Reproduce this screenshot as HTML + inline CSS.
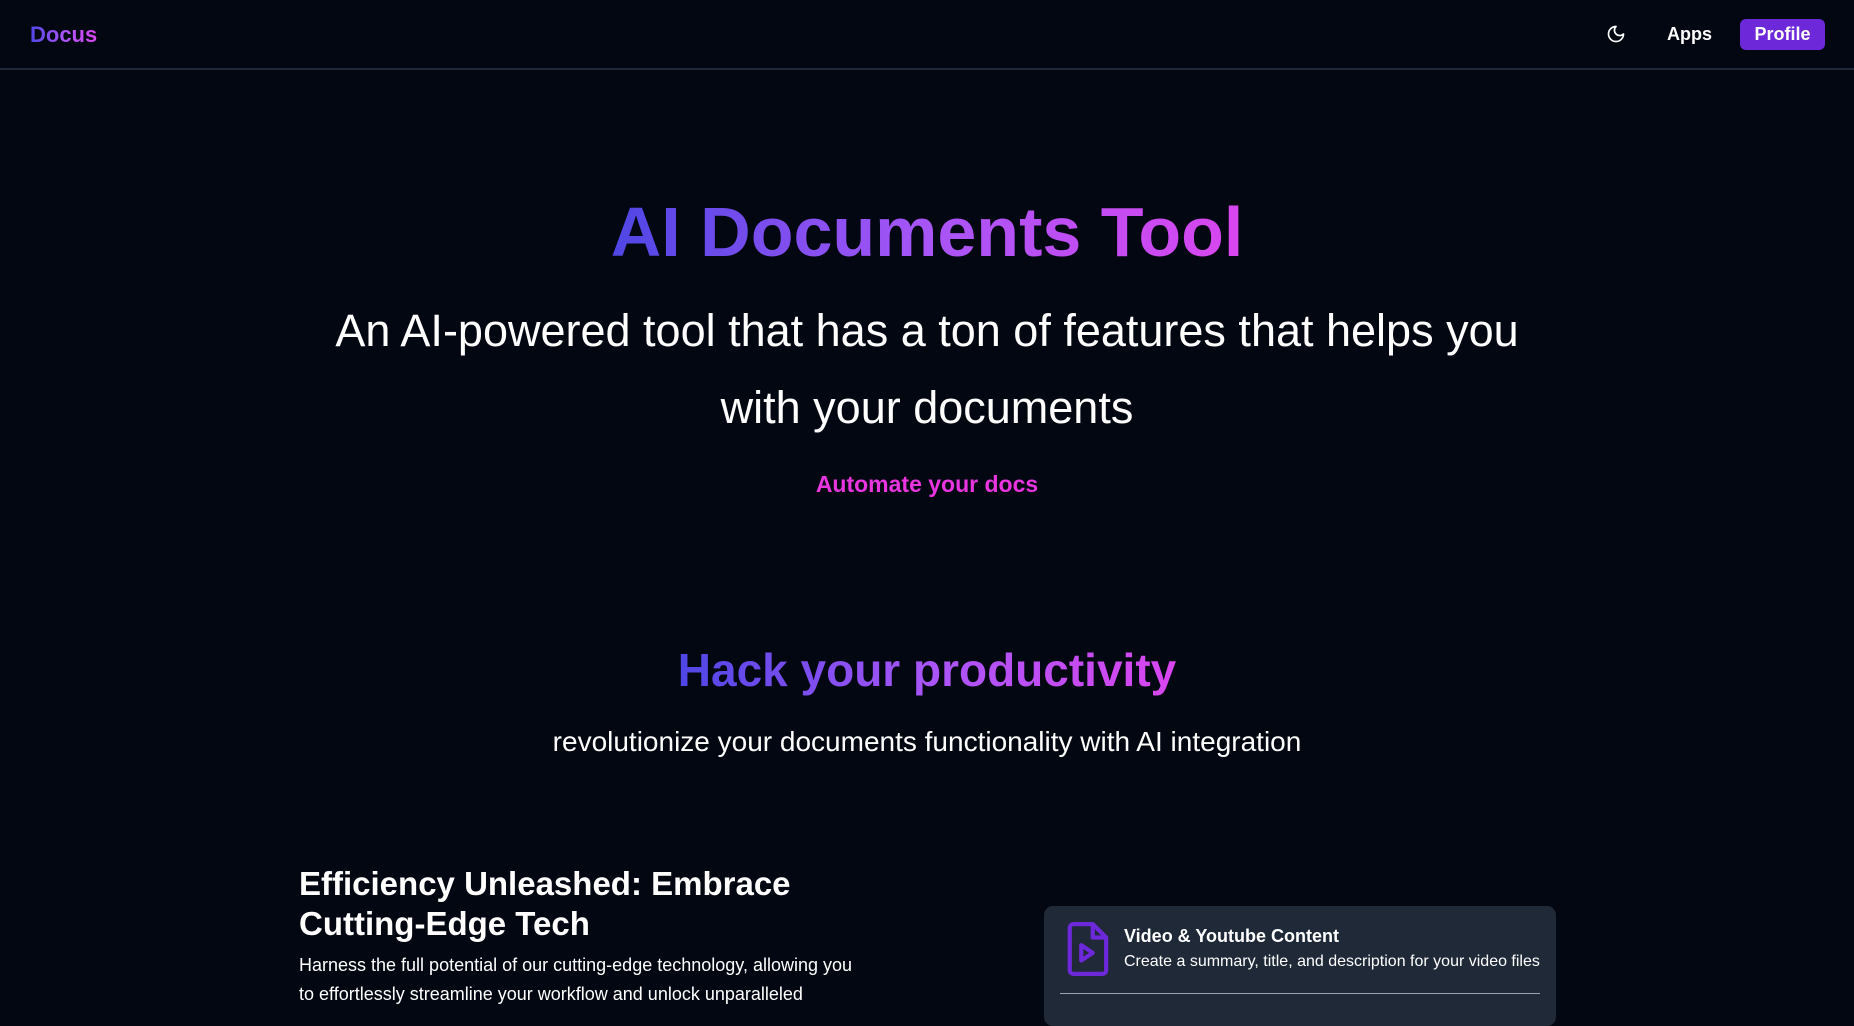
<!DOCTYPE html>
<html><head><style>
*{margin:0;padding:0;box-sizing:border-box}
body{width:1854px;height:1013px;overflow:hidden;background:#030712;font-family:"Liberation Sans",sans-serif;color:#fff;position:relative}
.a{position:absolute;white-space:nowrap}
.grad{background:linear-gradient(90deg,#4f46e5,#a855f7,#d946ef);-webkit-background-clip:text;background-clip:text;color:transparent}
.c{left:0;width:1854px;text-align:center}
</style></head><body>
<div class="a grad" style="left:30px;top:22px;font-size:22px;font-weight:bold">Docus</div>
<svg class="a" style="left:1606px;top:24px" width="20" height="20" viewBox="0 0 24 24" fill="none" stroke="#fff" stroke-width="2" stroke-linecap="round" stroke-linejoin="round"><path d="M12 3a6 6 0 0 0 9 9 9 9 0 1 1-9-9z"/></svg>
<div class="a" style="left:1667px;top:24px;font-size:18px;font-weight:bold">Apps</div>
<div class="a" style="left:1740px;top:19px;width:85px;height:31px;background:#6d28d9;border-radius:6px;font-size:18px;font-weight:bold;text-align:center;line-height:31px">Profile</div>
<div class="a" style="left:0;top:68px;width:1854px;height:2px;background:#1f2937"></div>
<div class="a c"><span class="grad" style="display:inline-block;margin-top:188px;font-size:70px;font-weight:bold;line-height:88px">AI Documents Tool</span></div>
<div class="a c" style="top:292px;font-size:45px;line-height:77px">An AI-powered tool that has a ton of features that helps you<br>with your documents</div>
<div class="a c" style="top:471px;font-size:23px;font-weight:bold;color:#e935e0">Automate your docs</div>
<div class="a c"><span class="grad" style="display:inline-block;margin-top:641px;font-size:46px;font-weight:bold;line-height:58px">Hack your productivity</span></div>
<div class="a c" style="top:726px;font-size:28px">revolutionize your documents functionality with AI integration</div>
<div class="a" style="left:299px;top:864px;font-size:33px;font-weight:bold;line-height:40px;white-space:normal;width:540px">Efficiency Unleashed: Embrace Cutting-Edge Tech</div>
<div class="a" style="left:299px;top:951px;font-size:18px;line-height:29px">Harness the full potential of our cutting-edge technology, allowing you<br>to effortlessly streamline your workflow and unlock unparalleled</div>
<div class="a" style="left:1044px;top:906px;width:512px;height:120px;background:#1f2937;border-radius:9px">
<svg class="a" style="left:20px;top:16px" width="46" height="54" viewBox="0 0 24 28" fill="none" stroke="#6d28d9" stroke-width="2.2" stroke-linejoin="round"><path d="M3 3a2 2 0 0 1 2-2h10l7 7v17a2 2 0 0 1-2 2H5a2 2 0 0 1-2-2z"/><path d="M15 1v7h7"/><path d="M9 12v8l6-4z"/></svg>
<div class="a" style="left:80px;top:20px;font-size:18px;font-weight:bold">Video &amp; Youtube Content</div>
<div class="a" style="left:80px;top:47px;font-size:16px">Create a summary, title, and description for your video files</div>
<div class="a" style="left:16px;top:87px;width:480px;height:1px;background:#9ca3af"></div>
</div>
</body></html>
